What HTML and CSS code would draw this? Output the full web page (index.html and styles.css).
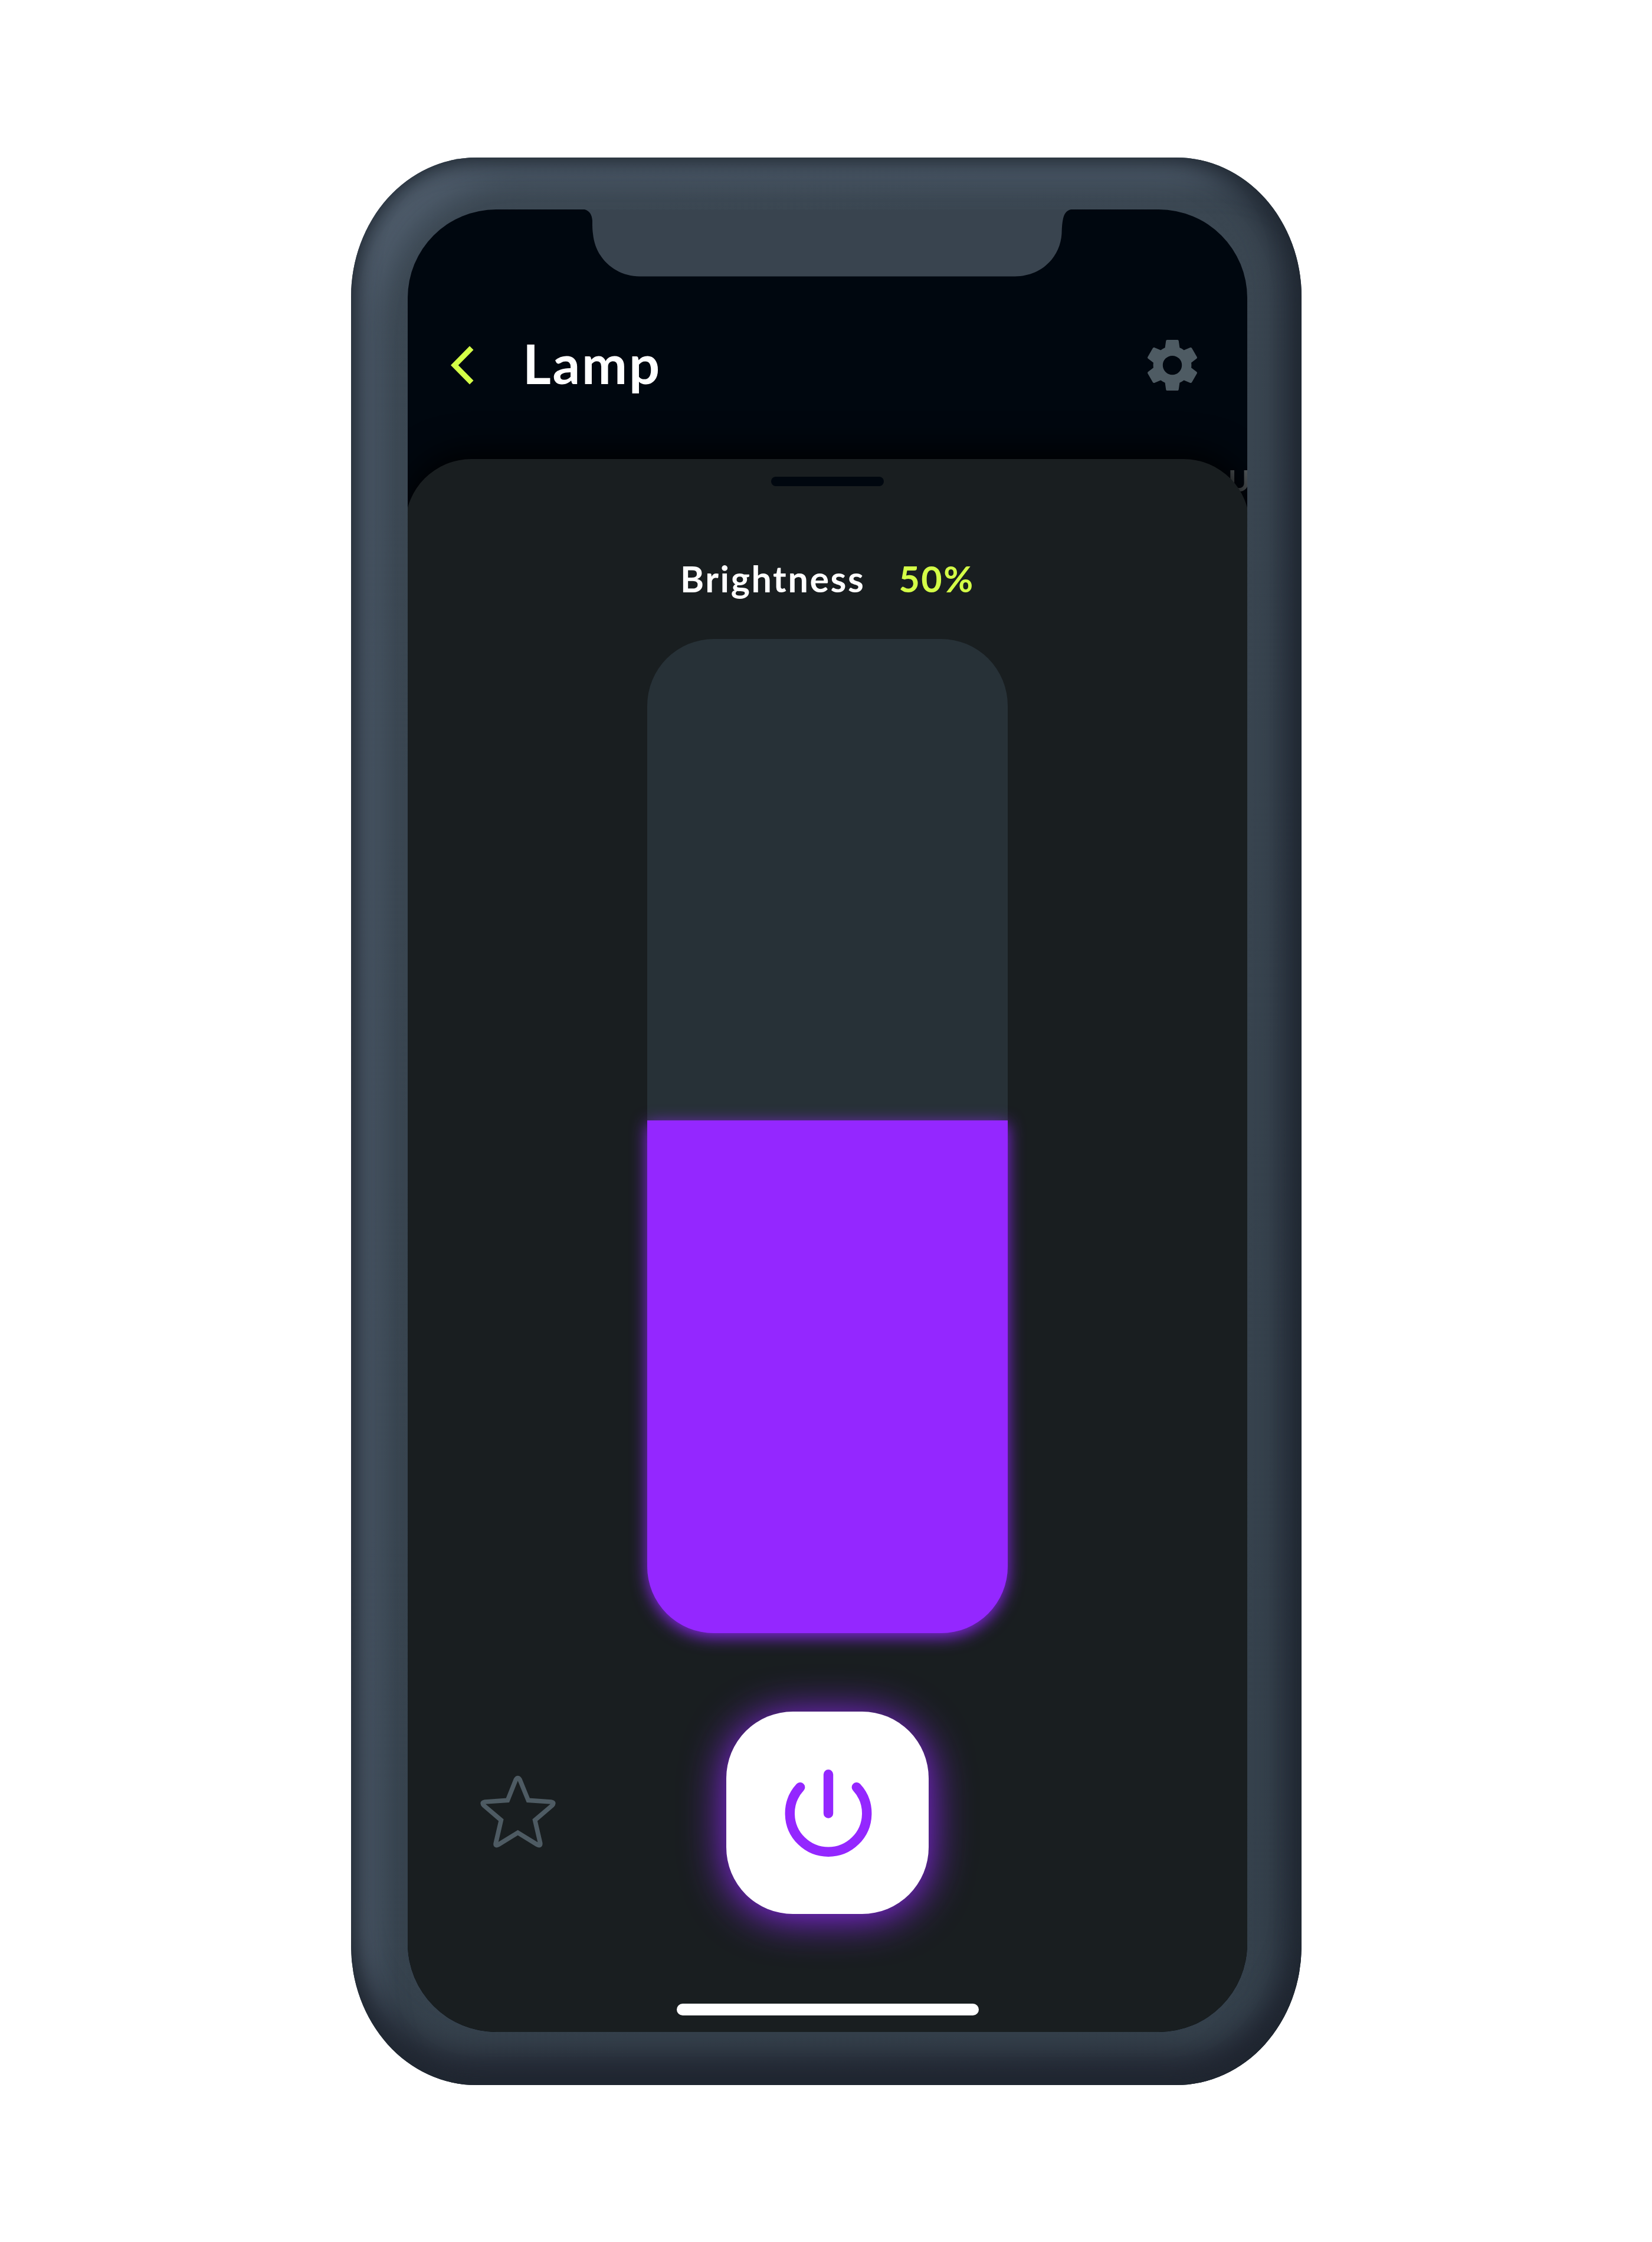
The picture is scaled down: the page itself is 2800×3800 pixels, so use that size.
FILE: index.html
```html
<!DOCTYPE html>
<html lang="en">
<head>
<meta charset="utf-8">
<title>Lamp</title>
<link rel="stylesheet" href="styles.css">
</head>
<body>
<main class="phone">
  <div class="screen">
    <svg class="notch" viewBox="0 0 840 116" aria-hidden="true">
      <path d="M0 0C12 1 18 7 19 20C19 30 19 34 20 42C24 86 60 114.500 99 114.500H735C780 114.500 812 82 814.500 42C815 30 815 26 817 16C820 4 826 0 840 0Z"/>
    </svg>
    <header class="topbar">
      <svg class="back" viewBox="0 0 39 66"><path d="M0 33 32 0.500 38.500 7 12.800 33 38.500 59 32 65.500Z"/></svg>
      <h1 class="title">Lamp</h1>
      <svg class="gear" viewBox="2.270 2 19.460 20" preserveAspectRatio="none"><path d="M19.430 12.980c.04-.32.07-.64.07-.98s-.03-.66-.07-.98l2.110-1.650c.19-.15.24-.42.12-.64l-2-3.460c-.12-.22-.39-.3-.61-.22l-2.490 1c-.52-.4-1.080-.73-1.690-.98l-.38-2.650C14.460 2.180 14.250 2 14 2h-4c-.25 0-.46.18-.49.42l-.38 2.650c-.61.25-1.170.59-1.690.98l-2.490-1c-.23-.09-.49 0-.61.22l-2 3.460c-.13.22-.07.49.12.64l2.110 1.650c-.04.32-.07.65-.07.98s.03.66.07.98l-2.110 1.650c-.19.15-.24.42-.12.64l2 3.460c.12.22.39.3.61.22l2.490-1c.52.4 1.080.73 1.690.98l.38 2.650c.03.24.24.42.49.42h4c.25 0 .46-.18.49-.42l.38-2.650c.61-.25 1.170-.59 1.690-.98l2.490 1c.23.09.49 0 .61-.22l2-3.460c.12-.22.07-.49-.12-.64zM12 15.750a3.750 3.750 0 1 1 0-7.500 3.750 3.750 0 0 1 0 7.500z"/></svg>
    </header>
    <span class="behind">OU</span>
    <section class="sheet">
      <div class="handle"></div>
      <div class="reading"><span class="label">Brightness</span><span class="value">50%</span></div>
      <div class="slider"><div class="fill"></div></div>
      <div class="actions">
        <svg class="star" viewBox="100 85 390 375"><path d="M242 215 284 110Q294 94 304 110L347 215 463 223Q483 226 468 242L381 316 408 433Q410 450 392 440L294 380 196 440Q178 450 182 433L209 316 122 242Q107 226 127 223Z"/></svg>
        <button class="power" aria-label="Power">
          <svg viewBox="0 0 160 160"><path d="M32.200 36.200A65.200 65.200 0 1 0 127.800 36.200M80 14.500V80.500"/></svg>
        </button>
      </div>
      <div class="home"></div>
    </section>
  </div>
</main>
</body>
</html>
```
FILE: styles.css
```css
* { box-sizing: border-box; }
body {
  margin: 0;
  background: #fff;
  font-family: Lato, "Noto Sans", sans-serif;
}
svg { display: block; }
.phone {
  width: 1611px;
  height: 3267px;
  margin: 267px 0 0 595px;
  padding: 88px 92px 90px 96px;
  border-radius: 212px / 236px;
  background: linear-gradient(155deg, #3c4853, #35414c);
  box-shadow:
    inset 0 0 36px 4px #1f2831,
    inset 0 -60px 52px -8px rgba(30, 34, 46, .85),
    inset -40px 0 50px -6px rgba(30, 36, 48, .66),
    inset 66px 62px 46px -34px rgba(110, 125, 142, .28),
    inset 74px 68px 40px -16px rgba(88, 102, 120, .32);
}
.screen {
  position: relative;
  height: 3089px;
  border-radius: 150px;
  overflow: hidden;
  background: #00070f;
}
.notch {
  position: absolute;
  left: 294px;
  top: -1px;
  width: 840px;
  height: 116px;
  fill: #39444f;
}
.topbar {
  display: flex;
  align-items: center;
  height: 423px;
  padding: 104px 85px 0 73px;
}
.back { width: 39px; height: 66px; fill: #d4ff47; }
.title {
  margin: 0 auto 0 83px;
  padding-bottom: 6px;
  font-size: 92px;
  font-weight: 700;
  line-height: 100px;
  letter-spacing: 2.800px;
  color: #fff;
}
.gear { width: 84px; height: 86px; fill: #4e5b63; }
.behind {
  position: absolute;
  right: -7px;
  top: 429px;
  font-size: 50px;
  font-weight: 700;
  line-height: 60px;
  letter-spacing: 2px;
  color: #5c6265;
}
.sheet {
  position: relative;
  display: flex;
  flex-direction: column;
  align-items: center;
  height: 2666px;
  margin: 0 -4px;
  padding-top: 30px;
  border-radius: 112px 112px 0 0;
  background: #191e20;
  box-shadow: 0 -10px 60px #000;
}
.handle { width: 191px; height: 16px; border-radius: 8px; background: #00070f; }
.reading {
  display: flex;
  gap: 57px;
  height: 80px;
  margin-top: 117px;
  font-size: 61px;
  font-weight: 700;
  line-height: 80px;
  letter-spacing: 2.600px;
}
.label { color: #fff; }
.value { color: #d4ff47; }
.slider {
  display: flex;
  flex-direction: column;
  justify-content: flex-end;
  width: 611px;
  height: 1685px;
  margin-top: 62px;
  border-radius: 113px;
  background: #273137;
}
.fill {
  height: 869px;
  border-radius: 0 0 113px 113px;
  background: #9427ff;
  box-shadow: 0 6px 28px rgba(148, 39, 255, .9);
}
.actions {
  display: grid;
  grid-template-columns: 1fr 343px 1fr;
  align-items: center;
  width: 100%;
  margin-top: 133px;
}
.star {
  width: 130px;
  height: 125px;
  margin: 0 0 4px 126px;
  fill: none;
  stroke: #4e5b63;
  stroke-width: 23;
}
.power {
  display: flex;
  align-items: center;
  justify-content: center;
  width: 343px;
  height: 343px;
  padding: 0 0 0 3px;
  border: 0;
  border-radius: 113px;
  background: #fff;
  box-shadow: 0 6px 72px rgba(148, 39, 255, .98);
}
.power svg {
  width: 160px;
  height: 160px;
  fill: none;
  stroke: #9427ff;
  stroke-width: 16.400;
  stroke-linecap: round;
}
.home { width: 512px; height: 20px; margin-top: 152px; border-radius: 10px; background: #fff; }
```
